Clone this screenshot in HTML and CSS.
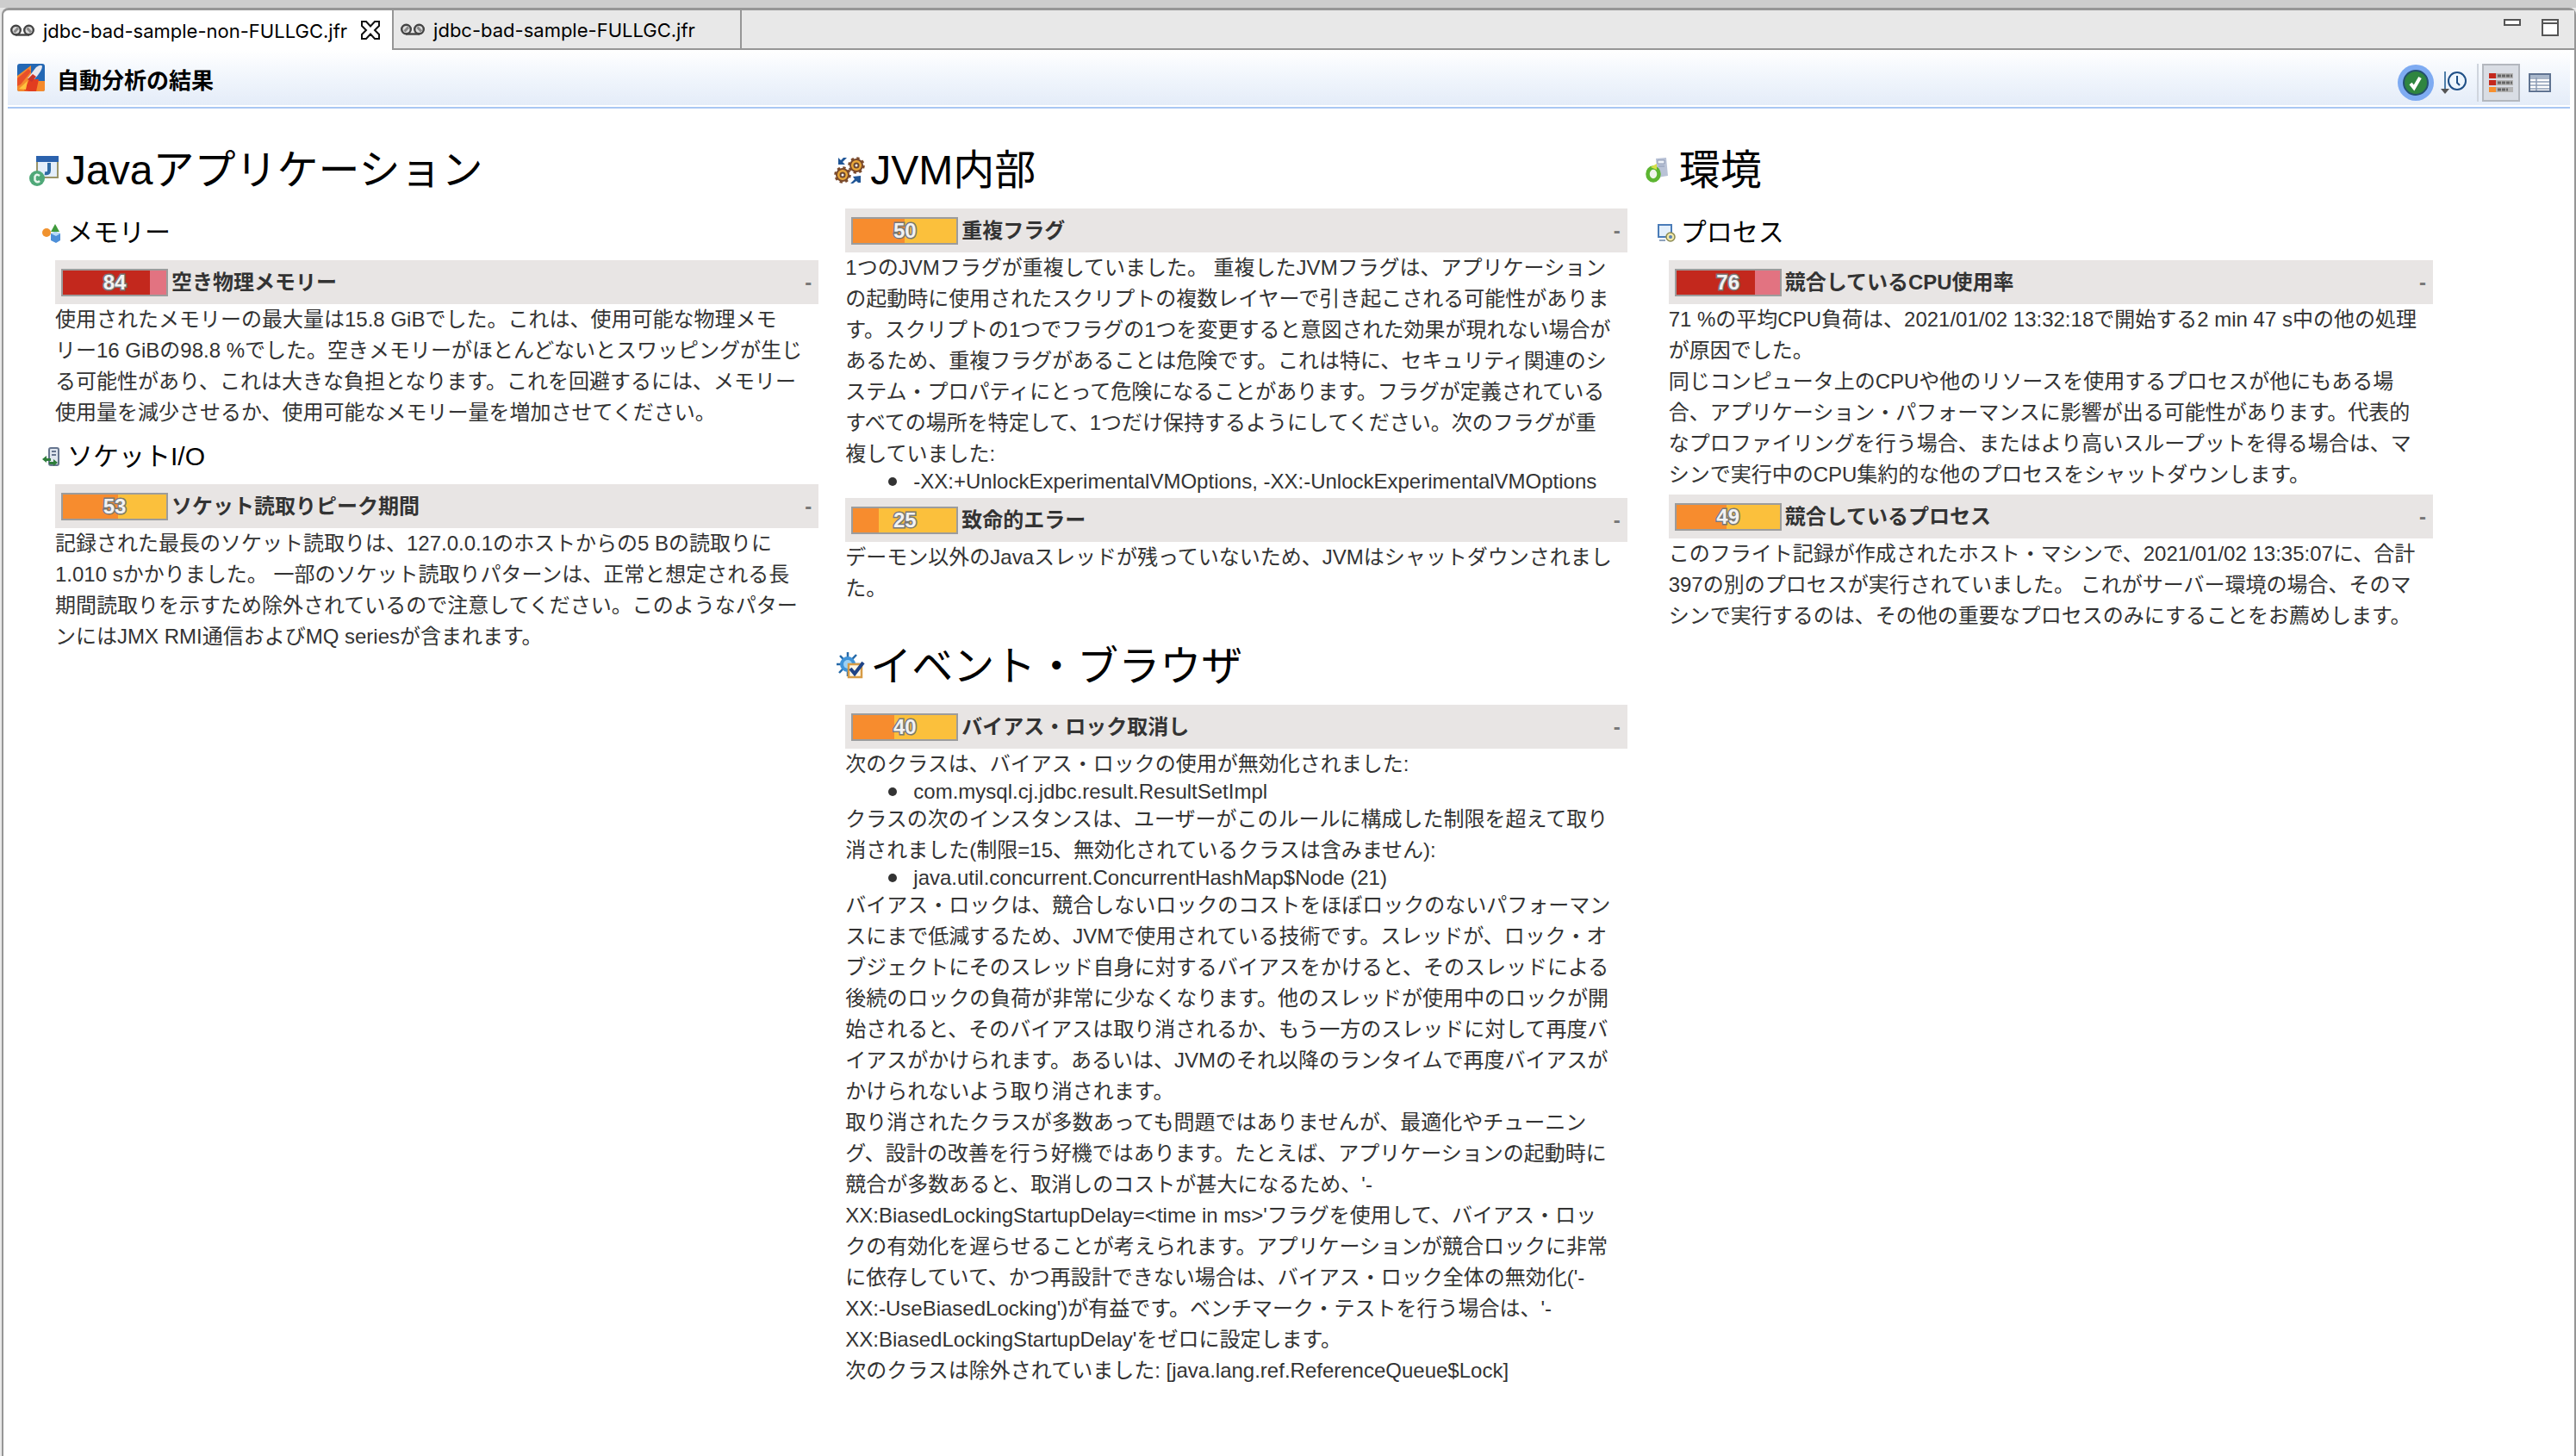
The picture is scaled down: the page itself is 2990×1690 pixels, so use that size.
FILE: index.html
```html
<!DOCTYPE html>
<html lang="ja">
<head>
<meta charset="utf-8">
<title>自動分析の結果</title>
<link rel="stylesheet" href="styles.css">
</head>
<body>
<div class="window-edge"></div>
<div class="editor">
  <nav class="tabs">
    <a class="tab tab-active" href="#non-fullgc">
      <svg class="tape" viewBox="0 0 28 14" aria-hidden="true"><g fill="#ddd" stroke="#444" stroke-width="2.4"><path d="M6 12.5H22"/><circle cx="6.5" cy="7" r="5.3"/><circle cx="21.5" cy="7" r="5.3"/></g><path d="M4.500 9.500L9 4.500M19.500 4.500L24 9.500" stroke="#888" stroke-width="3"/></svg>
      <span>jdbc-bad-sample-non-FULLGC.jfr</span>
    </a>
    <button class="tab-close" type="button" aria-label="閉じる">
      <svg viewBox="0 0 22 22" aria-hidden="true"><path d="M1 1H6L11 6.500L16 1H21V6L16 11L21 16V21H16L11 15.500L6 21H1V16L6 11L1 6Z" fill="#fff" stroke="#111" stroke-width="2"/></svg>
    </button>
    <a class="tab tab-idle" href="#fullgc">
      <svg class="tape" viewBox="0 0 28 14" aria-hidden="true"><g fill="#ddd" stroke="#444" stroke-width="2.4"><path d="M6 12.5H22"/><circle cx="6.5" cy="7" r="5.3"/><circle cx="21.5" cy="7" r="5.3"/></g><path d="M4.500 9.500L9 4.500M19.500 4.500L24 9.500" stroke="#888" stroke-width="3"/></svg>
      <span>jdbc-bad-sample-FULLGC.jfr</span>
    </a>
    <div class="tab-space">
      <button class="pane-button" type="button" aria-label="最小化"><svg viewBox="0 0 20 20" aria-hidden="true"><rect x="1" y="1" width="18" height="6" fill="#fff" stroke="#555" stroke-width="2"/></svg></button>
      <button class="pane-button" type="button" aria-label="最大化"><svg viewBox="0 0 20 20" aria-hidden="true"><path d="M1 1H19V19H1ZM1 5H19" fill="#fff" stroke="#555" stroke-width="2"/></svg></button>
    </div>
  </nav>

  <header class="form-head">
    <svg class="form-icon" viewBox="0 0 32 32" aria-hidden="true"><rect width="32" height="32" rx="3" fill="#2468b4"/><path d="M0 14L16 2V20L32 20V30Q32 32 30 32H2Q0 32 0 30Z" fill="#f58a2c"/><path d="M0 17L13 6L16 9L4 24L0 26Z" fill="#e8502a"/><path d="M8 31L14 18L25 18L22 32H14Z" fill="#e23d1f"/><path d="M12 17L22 4Q28 0 29 3Q29 8 20 18Z" fill="#e8e8ee"/><path d="M12 18L18 12L22 15L17 21Z" fill="#c9352a"/><path d="M2 29L12 20L10 30Z" fill="#ffc23e"/></svg>
    <h1 class="form-title">自動分析の結果</h1>
    <div class="tools">
      <button class="tool tool-ok" type="button" aria-label="OKの結果を表示"><svg viewBox="0 0 42 42" aria-hidden="true"><circle cx="21" cy="21" r="21" fill="#7eabf2"/><circle cx="21" cy="21" r="14" fill="#2f8540" stroke="#24506e" stroke-width="2"/><path d="M15 22L19 27L26 15" fill="none" stroke="#fff" stroke-width="4"/></svg></button>
      <button class="tool tool-clock" type="button" aria-label="時間範囲"><svg viewBox="0 0 30 28" aria-hidden="true"><path d="M5 1V22" stroke="#4f7ea8" stroke-width="2"/><path d="M0 21H10L5 27Z" fill="#555"/><circle cx="19" cy="12" r="10" fill="#eef6fd" stroke="#1f4f86" stroke-width="2"/><path d="M19 6V14L22 17" fill="none" stroke="#1f4f86" stroke-width="2"/></svg></button>
      <span class="tool-divider"></span>
      <button class="tool tool-pressed" type="button" aria-label="結果ビュー"><svg viewBox="0 0 28 24" aria-hidden="true"><path d="M0 1H28V7H0ZM0 9H28V15H0ZM0 17H28V23H0Z" fill="#b4b4b4"/><path d="M0 1H8V7H0ZM0 9H8V15H0Z" fill="#c4281c"/><path d="M0 17H8V23H0Z" fill="#f78f2e"/><path d="M10 4H27M10 12H27M10 20H22" stroke="#666" stroke-width="3" stroke-dasharray="4 1"/></svg></button>
      <button class="tool tool-table" type="button" aria-label="表ビュー"><svg viewBox="0 0 26 22" aria-hidden="true"><rect x="1" y="1" width="24" height="20" fill="#fff" stroke="#5f7391" stroke-width="2"/><path d="M2 2H24V5H2Z" fill="#a9b8cc"/><path d="M2 6H24M2 10H24M2 14H24M2 18H24M9 5V20" stroke="#8d9db5" stroke-width="1.500"/></svg></button>
    </div>
  </header>

  <main class="results">
    <section class="column">
      <h2 class="topic"><svg viewBox="0 0 36 36" aria-hidden="true"><rect x="9" y="2" width="24" height="24" fill="#e4eefa" stroke="#9a9468" stroke-width="2"/><path d="M8 1H34V8H8Z" fill="#2b62ad"/><path d="M23 9V18Q23 22 18 21" fill="none" stroke="#2f6aa5" stroke-width="4"/><circle cx="9" cy="27" r="9" fill="#4fa878"/><path d="M12 24Q8 21 6.500 25V29Q9 33 12 30" fill="none" stroke="#e6f5ec" stroke-width="2.500"/></svg>Javaアプリケーション</h2>
      <h3 class="subtopic"><svg viewBox="0 0 24 24" aria-hidden="true"><circle cx="6" cy="12" r="5" fill="#f0922e"/><path d="M16 2L21 11H11Z" fill="#3f9a3c"/><path d="M11 13L16 11L22 13V21L17 24L11 21Z" fill="#4d8fd8"/><path d="M11 13L16 11L22 13L17 16Z" fill="#b9dbf8"/></svg>メモリー</h3>
      <article class="result nested">
        <div class="result-bar"><span class="score score-high"><i style="width:84%"></i><b>84</b></span><h4>空き物理メモリー</h4><button type="button">-</button></div>
        <p>使用されたメモリーの最大量は15.8 GiBでした。これは、使用可能な物理メモ<br>リー16 GiBの98.8 %でした。空きメモリーがほとんどないとスワッピングが生じ<br>る可能性があり、これは大きな負担となります。これを回避するには、メモリー<br>使用量を減少させるか、使用可能なメモリー量を増加させてください。</p>
      </article>
      <h3 class="subtopic"><svg viewBox="0 0 24 24" aria-hidden="true"><rect x="9" y="2" width="11" height="20" rx="2" fill="#dfe6ef" stroke="#66758f" stroke-width="2"/><path d="M12 6H17M12 10H17" stroke="#66758f" stroke-width="2"/><path d="M1 15L6 11V14H11V17H6V19ZM19 19L14 15V18H9V21H14V23Z" fill="#2e7d3b"/></svg>ソケットI/O</h3>
      <article class="result nested">
        <div class="result-bar"><span class="score"><i style="width:53%"></i><b>53</b></span><h4>ソケット読取りピーク期間</h4><button type="button">-</button></div>
        <p>記録された最長のソケット読取りは、127.0.0.1のホストからの5 Bの読取りに<br>1.010 sかかりました。 一部のソケット読取りパターンは、正常と想定される長<br>期間読取りを示すため除外されているので注意してください。このようなパター<br>ンにはJMX RMI通信およびMQ seriesが含まれます。</p>
      </article>
    </section>

    <section class="column">
      <h2 class="topic"><svg viewBox="0 0 36 36" aria-hidden="true"><g fill="#e9a83a" stroke="#7a4a2c"><circle cx="26" cy="12" r="7" stroke-width="2"/><circle cx="26" cy="12" r="8.500" fill="none" stroke-width="2.500" stroke-dasharray="3.300 3.380"/><circle cx="10" cy="23" r="7" stroke-width="2"/><circle cx="10" cy="23" r="8.500" fill="none" stroke-width="2.500" stroke-dasharray="3.300 3.380"/></g><g fill="#fff" stroke="#6b4630" stroke-width="2"><circle cx="26" cy="12" r="2.500"/><circle cx="10" cy="23" r="2.500"/></g><path d="M5 3V11H13L10 8L15 3H11L8 6ZM31 24V32H28L26 30L22 33H19L24 28L22 25Z" fill="#1f5596"/></svg>JVM内部</h2>
      <article class="result">
        <div class="result-bar"><span class="score"><i style="width:50%"></i><b>50</b></span><h4>重複フラグ</h4><button type="button">-</button></div>
        <p>1つのJVMフラグが重複していました。 重複したJVMフラグは、アプリケーション<br>の起動時に使用されたスクリプトの複数レイヤーで引き起こされる可能性がありま<br>す。スクリプトの1つでフラグの1つを変更すると意図された効果が現れない場合が<br>あるため、重複フラグがあることは危険です。これは特に、セキュリティ関連のシ<br>ステム・プロパティにとって危険になることがあります。フラグが定義されている<br>すべての場所を特定して、1つだけ保持するようにしてください。次のフラグが重<br>複していました:</p>
        <ul><li>-XX:+UnlockExperimentalVMOptions, -XX:-UnlockExperimentalVMOptions</li></ul>
      </article>
      <article class="result">
        <div class="result-bar"><span class="score"><i style="width:25%"></i><b>25</b></span><h4>致命的エラー</h4><button type="button">-</button></div>
        <p>デーモン以外のJavaスレッドが残っていないため、JVMはシャットダウンされまし<br>た。</p>
      </article>
      <h2 class="topic"><svg viewBox="0 0 36 36" aria-hidden="true"><path d="M16 1V29M3 15H30M7 5L26 25M26 4L6 25" stroke="#2569a8" stroke-width="2.500"/><circle cx="16" cy="15" r="9" fill="#3f93d8"/><circle cx="16" cy="15" r="5" fill="#9ad0f5"/><rect x="17" y="15" width="15" height="15" fill="#fdf6e6" stroke="#d79b45" stroke-width="2.500"/><path d="M19 20L24 26L34 13" fill="none" stroke="#1f4486" stroke-width="4"/></svg>イベント・ブラウザ</h2>
      <article class="result">
        <div class="result-bar"><span class="score"><i style="width:40%"></i><b>40</b></span><h4>バイアス・ロック取消し</h4><button type="button">-</button></div>
        <p>次のクラスは、バイアス・ロックの使用が無効化されました:</p>
        <ul><li>com.mysql.cj.jdbc.result.ResultSetImpl</li></ul>
        <p>クラスの次のインスタンスは、ユーザーがこのルールに構成した制限を超えて取り<br>消されました(制限=15、無効化されているクラスは含みません):</p>
        <ul><li>java.util.concurrent.ConcurrentHashMap$Node (21)</li></ul>
        <p>バイアス・ロックは、競合しないロックのコストをほぼロックのないパフォーマン<br>スにまで低減するため、JVMで使用されている技術です。スレッドが、ロック・オ<br>ブジェクトにそのスレッド自身に対するバイアスをかけると、そのスレッドによる<br>後続のロックの負荷が非常に少なくなります。他のスレッドが使用中のロックが開<br>始されると、そのバイアスは取り消されるか、もう一方のスレッドに対して再度バ<br>イアスがかけられます。あるいは、JVMのそれ以降のランタイムで再度バイアスが<br>かけられないよう取り消されます。</p>
        <p>取り消されたクラスが多数あっても問題ではありませんが、最適化やチューニン<br>グ、設計の改善を行う好機ではあります。たとえば、アプリケーションの起動時に<br>競合が多数あると、取消しのコストが甚大になるため、'-<br>XX:BiasedLockingStartupDelay=&lt;time in ms&gt;'フラグを使用して、バイアス・ロッ<br>クの有効化を遅らせることが考えられます。アプリケーションが競合ロックに非常<br>に依存していて、かつ再設計できない場合は、バイアス・ロック全体の無効化('-<br>XX:-UseBiasedLocking')が有益です。ベンチマーク・テストを行う場合は、'-<br>XX:BiasedLockingStartupDelay'をゼロに設定します。</p>
        <p>次のクラスは除外されていました: [java.lang.ref.ReferenceQueue$Lock]</p>
      </article>
    </section>

    <section class="column">
      <h2 class="topic"><svg viewBox="0 0 36 36" aria-hidden="true"><path d="M15 4L27 3L29 24L17 26Z" fill="#b9c2d6"/><path d="M17 6H25V10H17ZM18 13H25" fill="#eef2f8" stroke="#8d99b4" stroke-width="1"/><ellipse cx="12" cy="22" rx="6.500" ry="7.500" fill="#eef5ea" stroke="#5cb531" stroke-width="4.500"/><path d="M9 14L16 10L16 17Z" fill="#d7e04a"/></svg>環境</h2>
      <h3 class="subtopic"><svg viewBox="0 0 24 24" aria-hidden="true"><rect x="4" y="3" width="15" height="14" fill="#e3effb" stroke="#4a7cb8" stroke-width="2"/><path d="M5 21H12" stroke="#8fa3bd" stroke-width="2"/><circle cx="18" cy="17" r="5" fill="#f3e9a8" stroke="#8b8a52" stroke-width="1.500"/><circle cx="18" cy="17" r="2" fill="#5a83b5"/></svg>プロセス</h3>
      <article class="result nested">
        <div class="result-bar"><span class="score score-high"><i style="width:76%"></i><b>76</b></span><h4>競合しているCPU使用率</h4><button type="button">-</button></div>
        <p>71 %の平均CPU負荷は、2021/01/02 13:32:18で開始する2 min 47 s中の他の処理<br>が原因でした。<br>同じコンピュータ上のCPUや他のリソースを使用するプロセスが他にもある場<br>合、アプリケーション・パフォーマンスに影響が出る可能性があります。代表的<br>なプロファイリングを行う場合、またはより高いスループットを得る場合は、マ<br>シンで実行中のCPU集約的な他のプロセスをシャットダウンします。</p>
      </article>
      <article class="result nested">
        <div class="result-bar"><span class="score"><i style="width:49%"></i><b>49</b></span><h4>競合しているプロセス</h4><button type="button">-</button></div>
        <p>このフライト記録が作成されたホスト・マシンで、2021/01/02 13:35:07に、合計<br>397の別のプロセスが実行されていました。 これがサーバー環境の場合、そのマ<br>シンで実行するのは、その他の重要なプロセスのみにすることをお薦めします。</p>
      </article>
    </section>
  </main>
</div>
</body>
</html>
```
FILE: styles.css
```css
* { box-sizing: border-box; }

body {
  margin: 0;
  min-height: 100vh;
  display: flex;
  flex-direction: column;
  background: #e8e8e8;
  color: #333;
  font: 24px/36px "Liberation Sans", "Noto Sans CJK JP", sans-serif;
}

h1, h2, h3, h4, p, ul { margin: 0; padding: 0; font-weight: 400; }

button {
  margin: 0;
  padding: 0;
  border: 0;
  background: none;
  color: inherit;
  font: inherit;
}

svg { display: block; flex: none; }

.window-edge {
  height: 9px;
  background: #cdcdcd;
}

.editor {
  flex: 1;
  margin-left: 2px;
  border: 2px solid #969696;
  border-top-width: 3px;
  border-bottom: 0;
  border-radius: 8px 8px 0 0;
  background: #fff;
}

/* Tab strip */
.tabs {
  display: flex;
  height: 46px;
  color: #000;
  font: 22px/44px "Inter", "Noto Sans CJK JP", sans-serif;
}

.tab {
  display: flex;
  align-items: center;
  gap: 10px;
  padding-left: 8px;
  color: inherit;
  text-decoration: none;
  white-space: nowrap;
}

.tab span { padding-top: 2px; }
.tape { width: 28px; height: 14px; }
.tab-close { width: 54px; padding: 0 16px; border-right: 2px solid #969696; }
.tab-close svg { width: 22px; height: 22px; }

.tab-idle {
  padding-right: 52px;
  border-right: 2px solid #969696;
  border-bottom: 2px solid #969696;
  background: #e8e8e8;
}

.tab-space {
  flex: 1;
  display: flex;
  justify-content: flex-end;
  align-items: flex-start;
  gap: 24px;
  padding: 10px 18px 0 0;
  border-bottom: 2px solid #969696;
  background: #e8e8e8;
}

.pane-button, .pane-button svg { width: 20px; height: 20px; }

/* Form heading */
.form-head {
  display: flex;
  align-items: center;
  height: 68px;
  margin: 0 5px;
  padding: 0 22px 0 11px;
  border-bottom: 2px solid #a9c7f3;
  background: linear-gradient(#fff, #f0f5fc 50%, #e4ecf8 64px, #fff 64px);
}

.form-icon { width: 32px; height: 32px; margin-bottom: 2px; }

.form-title {
  flex: 1;
  padding: 2px 0 0 14px;
  color: #000;
  font: 700 26px/36px "Noto Sans CJK JP", sans-serif;
}

.tools { display: flex; align-items: center; padding-top: 10px; }
.tool { display: flex; justify-content: center; }
.tool-ok, .tool-ok svg { width: 42px; height: 42px; }
.tool-clock { margin: 0 12px 0 8px; }
.tool-clock svg { width: 30px; height: 28px; }
.tool-divider { width: 2px; height: 44px; margin-right: 4px; background: #cfd5de; }

.tool-pressed {
  width: 44px;
  height: 44px;
  align-items: center;
  margin-right: 10px;
  border: 2px solid #b3b7be;
  background: #d9dde4;
}

.tool-pressed svg { width: 28px; height: 24px; }
.tool-table svg { width: 26px; height: 22px; }

/* Result columns */
.results {
  display: grid;
  grid-template-columns: 920fr 924fr 921fr;
  align-items: start;
  gap: 14px;
  padding: 4px 164px 40px 26px;
  white-space: nowrap;
}

.column { min-width: 0; }

.topic, .subtopic { display: flex; align-items: center; color: #000; }
.topic { height: 112px; gap: 6px; padding: 24px 0 0 4px; font-size: 48px; line-height: 64px; }
.topic svg { width: 36px; height: 36px; }
.subtopic { height: 60px; gap: 6px; padding: 0 0 4px 18px; font-size: 30px; line-height: 44px; }
.subtopic svg { width: 24px; height: 24px; }

.result { margin: 0 0 5px 17px; }
.result.nested { margin-left: 34px; }

.result-bar {
  display: flex;
  align-items: center;
  height: 51px;
  padding: 0 8px 0 7px;
  background: #e8e5e4;
}

.result-bar h4 { flex: 1; padding-left: 4px; font-size: 24px; font-weight: 700; line-height: 36px; }
.result-bar button { color: #777; font-weight: 700; }

.score {
  position: relative;
  width: 124px;
  height: 32px;
  border: 2px solid #9c9c9c;
  background: #fbc03c;
}

.score i { display: block; height: 100%; background: #f78c2e; }
.score-high { background: #e27381; }
.score-high i { background: #c3281d; }

.score b {
  position: absolute;
  inset: 0;
  color: #f2f2f2;
  line-height: 28px;
  text-align: center;
  -webkit-text-stroke: 3px #777;
  paint-order: stroke fill;
}

.result ul { list-style: none; }

.result li {
  display: flex;
  align-items: center;
  gap: 19px;
  padding-left: 50px;
  line-height: 28px;
}

.result li::before {
  content: "";
  width: 10px;
  height: 10px;
  border-radius: 50%;
  background: #333;
}
```
